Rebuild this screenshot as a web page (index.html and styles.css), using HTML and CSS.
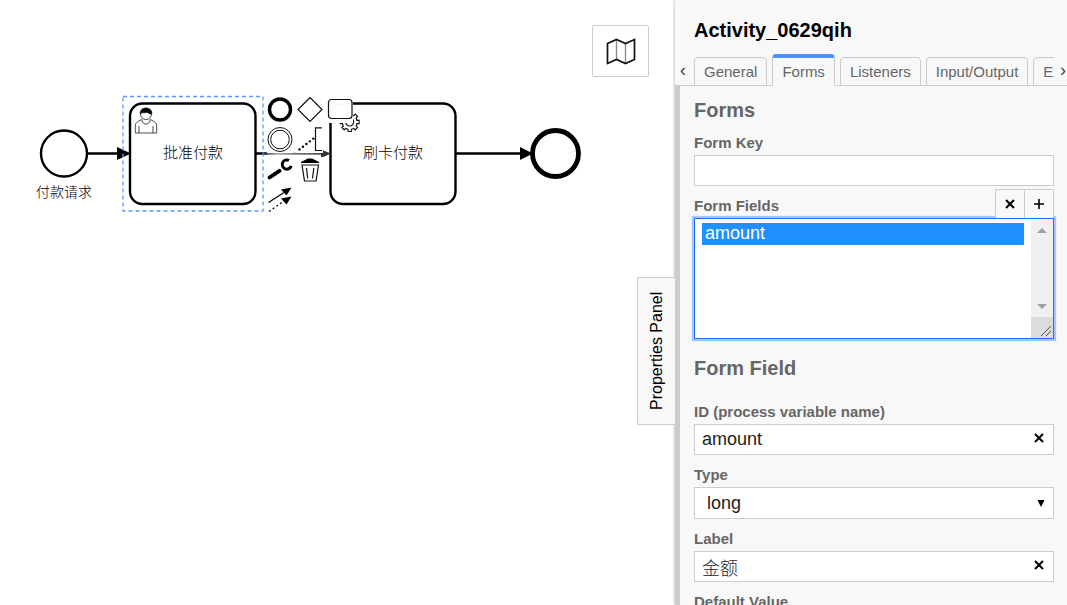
FILE: index.html
```html
<!DOCTYPE html>
<html lang="zh-CN">
<head>
<meta charset="utf-8">
<title>Activity_0629qih</title>
<link rel="stylesheet" href="styles.css">
</head>
<body>
<div class="modeler">
  <main class="canvas">
    <svg class="diagram" width="620" height="260" viewBox="0 0 620 260">
      <defs>
        <linearGradient id="fade" x1="264" x2="330" y1="0" y2="0" gradientUnits="userSpaceOnUse">
          <stop offset="0" stop-color="#333"/><stop offset=".2" stop-color="#aaa"/><stop offset=".5" stop-color="#777"/><stop offset="1" stop-color="#444"/>
        </linearGradient>
      </defs>
      <g fill="none" stroke="#000" stroke-width="2.4">
        <circle cx="64" cy="153.500" r="23"/>
        <rect x="130" y="103.500" width="125.500" height="100.500" rx="12.500"/>
        <rect x="330.500" y="103.500" width="125" height="100.500" rx="12.500"/>
        <circle cx="555.500" cy="153.500" r="23" stroke-width="4.800"/>
        <path d="M88 153.500H120M256 153.500H267M456 153.500H522"/>
        <path d="M264 153.500V154H324V153.500Z" stroke="url(#fade)" stroke-width="1.600"/>
      </g>
      <path d="M117 147L131 153.500L117 160ZM520 147L533 153.500L520 160Z"/>
      <path d="M321 149.500L331 153.500L321 158Z" fill="#333"/>
      <rect x="123" y="96.500" width="140" height="114.500" fill="none" stroke="#5b98ff" stroke-width="1.300" stroke-dasharray="4 3"/>
      <g fill="none" stroke="#222" stroke-width=".8">
        <path d="M142 119.500C137 121.500 135.300 123 135.300 126V133H156.700V126C156.700 123 155 121.500 150 119.500M142 119.500C141.500 125.500 150.500 125.500 150 119.500M139 126V133M153 126V133"/>
        <circle cx="146" cy="114" r="5.500"/>
        <path d="M140.300 114C139 106 153 106 151.700 114C149 114.500 148 112 146 112.500C143.500 113.500 142 111.500 140.300 114Z" fill="#000"/>
      </g>
      <g transform="translate(349.700 122)">
        <g fill="none" stroke="#111">
          <path d="M0 -10V10M-10 0H10M-7.100 -7.100L7.100 7.100M-7.100 7.100L7.100 -7.100" stroke-width="4.400"/>
          <circle r="7.500" fill="#fff" stroke-width="1.200"/>
        </g>
        <path d="M0 -8.900V8.900M-8.900 0H8.900M-6.300 -6.300L6.300 6.300M-6.300 6.300L6.300 -6.300" stroke="#fff" stroke-width="2.200"/>
        <circle r="4" fill="#fff" stroke="#111" stroke-width="1.200"/>
      </g>
      <text class="task-name" x="193" y="158">批准付款</text>
      <text class="task-name" x="393" y="158">刷卡付款</text>
      <text class="event-name" x="64" y="197">付款请求</text>
    </svg>
    <div class="context-pad">
      <button class="entry" aria-label="Append end event"><svg viewBox="0 0 26 26"><circle cx="13" cy="12.500" r="10.500" fill="none" stroke="#000" stroke-width="3.400"/></svg></button>
      <button class="entry" aria-label="Append gateway"><svg viewBox="0 0 26 26"><path d="M13 .5L25 12.500L13 24.500L1 12.500Z" fill="none" stroke="#111" stroke-width="1.200"/></svg></button>
      <button class="entry" aria-label="Append task"><svg viewBox="0 0 26 26"><rect x="1.500" y="2.500" width="23.500" height="19" rx="3" fill="none" stroke="#111" stroke-width="1.200"/></svg></button>
      <button class="entry" aria-label="Append intermediate event"><svg viewBox="0 0 26 26"><g fill="none" stroke="#111"><circle cx="13" cy="12.500" r="12"/><circle cx="13" cy="12.500" r="9.300"/></g></svg></button>
      <button class="entry" aria-label="Append text annotation"><svg viewBox="0 0 26 26"><path d="M25 .8H18.500V23.500H25" fill="none" stroke="#111" stroke-width="1.200"/><path d="M2.500 22.500L16.500 11.500" fill="none" stroke="#000" stroke-width="2.400" stroke-linecap="round" stroke-dasharray="0 4.400"/></svg></button>
      <span></span>
      <button class="entry" aria-label="Change type"><svg viewBox="0 0 26 26"><path d="M2.500 20.500L12.500 13.800" stroke="#000" stroke-width="3.800" stroke-linecap="round"/><path d="M22 3.500A4.600 4.600 0 1 0 24.200 9" fill="none" stroke="#000" stroke-width="3"/></svg></button>
      <button class="entry" aria-label="Remove"><svg viewBox="0 0 26 26"><path d="M4 5.500L11 2H15L22 5.500Z" stroke="#000"/><path d="M5 8H21.500L19 24H7.500ZM9.500 11L10.700 21.500M16.800 11L15.500 21.500" fill="none" stroke="#111" stroke-width="1.200"/></svg></button>
      <span></span>
      <button class="entry" aria-label="Connect"><svg viewBox="0 0 26 26"><path d="M1.500 15.500L17 5.500" stroke="#000" stroke-width="1.200"/><path d="M2 24.500L17 14" stroke="#000" stroke-width="1.300" stroke-dasharray="2 2.500"/><path d="M24.500 .5L19.500 8.500L14 2.500ZM24.500 9.500L19.500 17.500L14 11.500Z"/></svg></button>
    </div>
    <button class="minimap" aria-label="Open minimap">
      <svg width="30" height="28" viewBox="0 0 30 28" fill="none"><path d="M10.500 2.500V22M19.500 6.500V26" stroke="#888" stroke-width="1.300"/><path d="M1.500 6.500L10.500 2.500L19.500 6.500L28.500 2.500V22.500L19.500 26.500L10.500 22.500L1.500 26.500Z" stroke="#111" stroke-width="1.700"/></svg>
    </button>
  </main>
  <aside class="panel">
    <button class="toggle">Properties Panel</button>
    <header class="panel-header">
      <h1 class="title">Activity_0629qih</h1>
      <nav class="tabs">
        <button class="scroll-tabs" aria-label="Previous tabs">‹</button>
        <div class="tab-list">
          <a class="tab" href="#general">General</a>
          <a class="tab active" href="#forms">Forms</a>
          <a class="tab" href="#listeners">Listeners</a>
          <a class="tab" href="#io">Input/Output</a>
          <a class="tab" href="#extensions">Extensions</a>
        </div>
        <button class="scroll-tabs next" aria-label="Next tabs">›</button>
      </nav>
    </header>
    <form class="properties" id="forms">
      <h2 class="group-title">Forms</h2>
      <div class="field">
        <label for="form-key">Form Key</label>
        <input class="box" type="text" id="form-key">
      </div>
      <div class="field-list">
        <div class="list-head">
          <label for="form-fields">Form Fields</label>
          <div class="list-actions">
            <button type="button" aria-label="Remove field"><svg width="10" height="10" viewBox="0 0 10 10"><path d="M1 1L9 9M9 1L1 9" stroke="#000" stroke-width="2"/></svg></button>
            <button type="button" aria-label="Add field"><svg width="12" height="12" viewBox="0 0 12 12"><path d="M1 6H11M6 1V11" stroke="#000" stroke-width="1.600"/></svg></button>
          </div>
        </div>
        <div class="list">
          <select id="form-fields" size="5"><option selected>amount</option></select>
          <div class="scrollbar">
            <svg width="10" height="5" viewBox="0 0 10 5"><path d="M0 5L5 0L10 5Z" fill="#a0a0a0"/></svg>
            <svg width="10" height="5" viewBox="0 0 10 5"><path d="M0 0L5 5L10 0Z" fill="#a0a0a0"/></svg>
            <svg class="grip" width="22" height="21" viewBox="0 0 22 21"><path d="M10 19L20 9M15 19L20 14" stroke="#555"/></svg>
          </div>
        </div>
      </div>
      <h2 class="group-title spaced">Form Field</h2>
      <div class="field">
        <label for="field-id">ID (process variable name)</label>
        <div class="clearable">
          <input class="box" type="text" id="field-id" value="amount">
          <button type="button" class="clear" aria-label="Clear ID"><svg width="10" height="10" viewBox="0 0 10 10"><path d="M1 1L9 9M9 1L1 9" stroke="#000" stroke-width="2"/></svg></button>
        </div>
      </div>
      <div class="field">
        <label for="field-type">Type</label>
        <div class="clearable">
          <select class="box drop" id="field-type"><option>long</option></select>
          <svg class="arrow" width="8" height="7" viewBox="0 0 8 7"><path d="M.5 0H7.500L4 7Z"/></svg>
        </div>
      </div>
      <div class="field">
        <label for="field-label">Label</label>
        <div class="clearable">
          <input class="box" type="text" id="field-label" value="金额">
          <button type="button" class="clear" aria-label="Clear label"><svg width="10" height="10" viewBox="0 0 10 10"><path d="M1 1L9 9M9 1L1 9" stroke="#000" stroke-width="2"/></svg></button>
        </div>
      </div>
      <div class="field">
        <label for="field-default">Default Value</label>
        <input class="box" type="text" id="field-default">
      </div>
    </form>
  </aside>
</div>
</body>
</html>
```

FILE: styles.css
```css
* { box-sizing: border-box; }

body,
button,
input,
select {
  font-family: "Liberation Sans", "Noto Sans CJK SC", sans-serif;
}

body { margin: 0; }

button {
  padding: 0;
  border: 0;
  background: none;
}

svg { display: block; }

.modeler {
  display: flex;
  height: 100vh;
  overflow: hidden;
}

/* Canvas */
.canvas {
  position: relative;
  flex: 1;
  background: #fff;
}

.diagram {
  position: absolute;
  top: 0;
  left: 0;
}

.task-name,
.event-name {
  font-family: "Noto Sans CJK SC", sans-serif;
  font-weight: 300;
  text-anchor: middle;
}

.task-name { font-size: 15px; }
.event-name { font-size: 14px; }

.context-pad {
  position: absolute;
  top: 97px;
  left: 267px;
  display: grid;
  grid-template-columns: repeat(3, 26px);
  gap: 4px;
}

.entry {
  width: 26px;
  height: 26px;
  background: rgba(255, 255, 255, 0.97);
}

.minimap {
  position: absolute;
  top: 25px;
  right: 26px;
  display: grid;
  place-items: center;
  width: 57px;
  height: 52px;
  border: 1px solid #ccc;
  border-radius: 2px;
  background: #fff;
}

/* Properties panel */
.panel {
  position: relative;
  display: flex;
  flex-direction: column;
  width: 392px;
  background: #f8f8f8;
  box-shadow: 0 0 3px #999;
}

.toggle {
  position: absolute;
  top: 277px;
  right: 100%;
  width: 38px;
  height: 148px;
  border: 1px solid #ccc;
  border-left: 0;
  border-radius: 0 2px 2px 0;
  background: #f8f8f8;
  color: #000;
  font-size: 16px;
  writing-mode: vertical-rl;
  transform: rotate(180deg);
}

.title {
  margin: 0;
  padding: 18px 19px 12px;
  font-size: 20px;
  line-height: 24px;
}

.tabs {
  display: flex;
  height: 32px;
  border-bottom: 1px solid #ccc;
}

.scroll-tabs {
  width: 19px;
  padding: 0 3px 0 0;
  color: #444;
  font-size: 18px;
  line-height: 28px;
}

.scroll-tabs.next {
  width: 13px;
  padding: 0 0 0 5px;
}

.tab-list {
  display: flex;
  flex: 1;
  align-items: flex-end;
  gap: 5px;
  min-width: 0;
  height: 32px;
  overflow: hidden;
}

.tab {
  flex: none;
  height: 29px;
  padding: 0 9px;
  border: 1px solid #ccc;
  border-radius: 4px 4px 0 0;
  color: #666;
  font-size: 15px;
  line-height: 28px;
  text-decoration: none;
}

.tab.active {
  height: 32px;
  border-top: 4px solid #4d90ff;
  border-bottom-color: #f8f8f8;
}

.properties {
  flex: 1;
  min-height: 0;
  overflow: hidden;
  padding: 13px 13px 0 14px;
  border-left: 5px solid #ccc;
}

.group-title {
  margin: 0 0 12px;
  color: #666;
  font-size: 20px;
  line-height: 22px;
}

.group-title.spaced { margin: 18px 0 23px; }

.field { margin-bottom: 10px; }

label {
  display: block;
  color: #666;
  font-size: 15px;
  font-weight: bold;
  line-height: 20px;
}

.field label { margin-bottom: 2px; }

.box {
  display: block;
  width: 100%;
  height: 31px;
  padding: 0 28px 0 7px;
  border: 1px solid #ccc;
  border-radius: 0;
  background: #fff;
  color: #222;
  font-size: 18px;
  font-weight: 300;
}

.drop {
  height: 32px;
  padding-left: 12px;
  appearance: none;
}

.clearable { position: relative; }

.clear {
  position: absolute;
  top: 9px;
  right: 10px;
}

.arrow {
  position: absolute;
  top: 13px;
  right: 9px;
}

.field-list { margin-top: -7px; }

.list-head {
  display: flex;
  align-items: flex-end;
  justify-content: space-between;
}

.list-head label { padding-bottom: 2px; }

.list-actions {
  position: relative;
  z-index: 1;
  display: flex;
}

.list-actions button {
  display: grid;
  place-items: center;
  width: 30px;
  height: 29px;
  border: 1px solid #ccc;
  border-bottom: 0;
  background: #f8f8f8;
}

.list-actions button + button { margin-left: -1px; }

.list {
  display: flex;
  height: 121px;
  border: 1px solid #1a70ff;
  background: #fff;
  box-shadow: 0 0 1px 2px #a5c6ff;
}

.list select {
  flex: 1;
  min-width: 0;
  padding: 4px 7px;
  border: 0;
  outline: 0;
  background: #fff;
  font-size: 18px;
  overflow: hidden;
}

.list option {
  height: 22px;
  padding: 0 3px;
  line-height: 22px;
}

.list option:checked {
  background: linear-gradient(#1e90ff, #1e90ff);
  color: #fff;
}

.scrollbar {
  display: flex;
  flex-direction: column;
  align-items: center;
  justify-content: space-between;
  width: 22px;
  padding: 9px 0 0;
  background: #f0f0f0;
}

.grip { background: #dcdcdc; }

.scrollbar svg:nth-child(2) { margin: auto 0 8px; }
```
